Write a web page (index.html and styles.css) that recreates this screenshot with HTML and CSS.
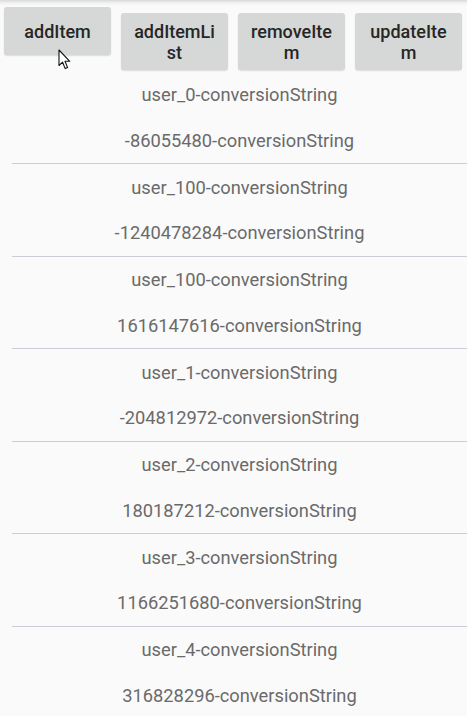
FILE: index.html
```html
<!DOCTYPE html>
<html>
<head>
<meta charset="utf-8">
<link rel="stylesheet" href="styles.css">
</head>
<body>
<div class="screen">
  <div class="toolbar">
    <button class="btn pressed">addItem</button>
    <button class="btn">addItemList</button>
    <button class="btn">removeItem</button>
    <button class="btn">updateItem</button>
  </div>
  <div class="list">
    <div class="row"><div class="line">user_0-conversionString</div><div class="line">-86055480-conversionString</div></div>
    <div class="row"><div class="line">user_100-conversionString</div><div class="line">-1240478284-conversionString</div></div>
    <div class="row"><div class="line">user_100-conversionString</div><div class="line">1616147616-conversionString</div></div>
    <div class="row"><div class="line">user_1-conversionString</div><div class="line">-204812972-conversionString</div></div>
    <div class="row"><div class="line">user_2-conversionString</div><div class="line">180187212-conversionString</div></div>
    <div class="row"><div class="line">user_3-conversionString</div><div class="line">1166251680-conversionString</div></div>
    <div class="row"><div class="line">user_4-conversionString</div><div class="line">316828296-conversionString</div></div>
  </div>
  <svg class="cursor" width="14" height="22" viewBox="0 0 14 22">
    <path d="M1 1 L1 16.5 L4.6 13.2 L7.2 19.6 L9.6 18.6 L7 12.3 L11.8 12.3 Z" fill="#fff" stroke="#111" stroke-width="1.1" stroke-linejoin="round"/>
  </svg>
</div>
</body>
</html>
```
FILE: styles.css
```css
html, body {
  margin: 0;
  padding: 0;
  background: #fafafa;
}
.screen {
  position: relative;
  width: 467px;
  height: 716px;
  overflow: hidden;
  font-family: Roboto, "Liberation Sans", sans-serif;
}
.toolbar {
  display: flex;
  align-items: baseline;
  gap: 10px;
  padding: 7px 5px 0 4px;
  height: 66px;
  box-sizing: border-box;
  background: linear-gradient(#d9d9d9 0, #f2f2f2 3px, #fafafa 6px);
}
.btn {
  flex: 0 0 107px;
  width: 107px;
  min-height: 48px;
  box-sizing: border-box;
  padding: 7.5px 10px;
  display: flex;
  align-items: center;
  justify-content: center;
  text-align: center;
  border: none;
  border-radius: 3px;
  background: #d6d7d7;
  box-shadow: 0 1px 1.5px rgba(0, 0, 0, 0.12);
  font-family: Roboto, "Liberation Sans", sans-serif;
  font-weight: 500;
  font-size: 18px;
  line-height: 21px;
  color: #262626;
  word-break: break-all;
}
.list {
  margin-top: 5.5px;
}
.row {
  margin-left: 12px;
  border-bottom: 1px solid #caccd8;
}
.line {
  height: 45.75px;
  box-sizing: border-box;
  padding-top: 1.5px;
  line-height: 44.25px;
  text-align: center;
  font-size: 18.3px;
  color: #6a6a6a;
  white-space: nowrap;
}
.cursor {
  position: absolute;
  left: 58px;
  top: 49px;
}
```
